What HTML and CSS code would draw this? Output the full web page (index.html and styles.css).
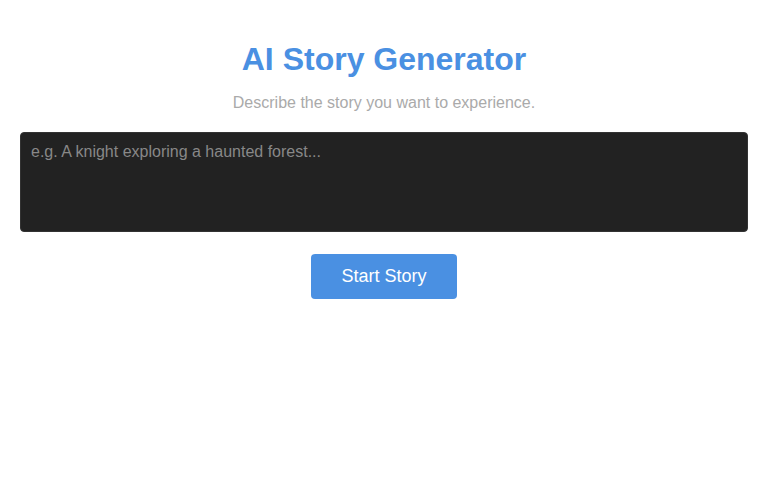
FILE: index.html
```html
<!DOCTYPE html>
<html lang="en">
<head>
    <meta charset="UTF-8">
    <meta name="viewport" content="width=device-width, initial-scale=1.0">
    <title>AI Story Generator</title>
    <link rel="stylesheet" href="styles.css">
</head>
<body>

<div class="container">
    <h1>AI Story Generator</h1>
    <p class="subtitle">Describe the story you want to experience.</p>
    <textarea id="prompt" class="prompt-box" placeholder="e.g. A knight exploring a haunted forest..."></textarea>
    <button id="startBtn" class="start-btn">Start Story</button>
</div>

</body>
</html>
```

FILE: styles.css
```css
body,
html {
    margin: 0;
    background-color: #ffffff;
    font-family: "Liberation Sans", Arial, sans-serif;
}
.container {
    padding: 20px;
    text-align: center;
}
h1 {
    color: #4a90e2;
    font-size: 32px;
    margin: 21px 0 16px;
}
.subtitle {
    color: #aaa;
    font-size: 16px;
    margin: 0 0 20px;
}
.prompt-box {
    display: block;
    box-sizing: border-box;
    width: 100%;
    height: 100px;
    padding: 10px;
    background-color: #222;
    color: #eee;
    border: 1px solid #333;
    border-radius: 4px;
    font-family: "Liberation Sans", Arial, sans-serif;
    font-size: 16px;
    resize: none;
}
.prompt-box::placeholder {
    color: #888;
}
.start-btn {
    margin-top: 22px;
    padding: 12px 30px;
    border: none;
    border-radius: 4px;
    background-color: #4a90e2;
    color: #fff;
    font-family: "Liberation Sans", Arial, sans-serif;
    font-size: 18px;
    cursor: pointer;
}
```
